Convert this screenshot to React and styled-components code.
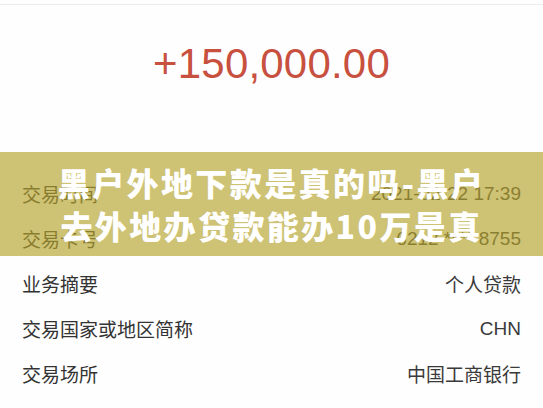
import React from "react";
import styled, { createGlobalStyle } from "styled-components";

const GlobalStyle = createGlobalStyle`
  html, body {
    margin: 0;
    padding: 0;
    background: #ffffff;
    overflow: hidden;
  }
  body {
    font-family: "Liberation Sans", "Noto Sans CJK SC", sans-serif;
  }
`;

const Page = styled.div`
  position: relative;
  width: 543px;
  height: 408px;
  overflow: hidden;
  background: #fefefe;
`;

const TopBar = styled.div`
  height: 4px;
  border-bottom: 1px solid #ececec;
`;

const AmountBlock = styled.div`
  height: 120px;
  display: flex;
  align-items: center;
  justify-content: center;
`;

const Amount = styled.div`
  font-size: 42px;
  color: #c8503f;
  letter-spacing: 0.2px;
  line-height: 1;
  margin-top: -2px;
`;

const List = styled.div`
  padding: 46px 22px 0;
`;

const Row = styled.div`
  height: 45px;
  display: flex;
  align-items: center;
  justify-content: space-between;
  font-size: 19px;
  color: #333333;
`;

const Label = styled.span`
  font-family: "Noto Sans CJK SC", sans-serif;
`;

const Value = styled.span`
  color: #3a3a3a;
  font-family: "Liberation Sans", "Noto Sans CJK SC", sans-serif;
`;

const Banner = styled.div`
  position: absolute;
  left: 0;
  right: 0;
  top: 152px;
  height: 104px;
  background: rgba(180, 163, 44, 0.66);
  display: flex;
  flex-direction: column;
  align-items: center;
  justify-content: center;
`;

const BannerLine = styled.div`
  font-family: "Noto Sans CJK SC", sans-serif;
  font-weight: 900;
  font-size: 32px;
  letter-spacing: 2.4px;
  line-height: 43px;
  color: #ffffff;
  white-space: nowrap;
`;

const rows = [
  ["交易时间", "2021-02-22 17:39"],
  ["交易卡号", "6212 **** 8755"],
  ["业务摘要", "个人贷款"],
  ["交易国家或地区简称", "CHN"],
  ["交易场所", "中国工商银行"],
  ["交易金额", "150,000.00"],
];

const App = () => {
  return (
    <>
      <GlobalStyle />
      <Page>
        <TopBar />
        <AmountBlock>
          <Amount>+150,000.00</Amount>
        </AmountBlock>
        <List>
          {rows.map(([label, value]) => (
            <Row key={label}>
              <Label>{label}</Label>
              <Value>{value}</Value>
            </Row>
          ))}
        </List>
        <Banner>
          <BannerLine>黑户外地下款是真的吗-黑户</BannerLine>
          <BannerLine>去外地办贷款能办10万是真</BannerLine>
        </Banner>
      </Page>
    </>
  );
};

export default App;
